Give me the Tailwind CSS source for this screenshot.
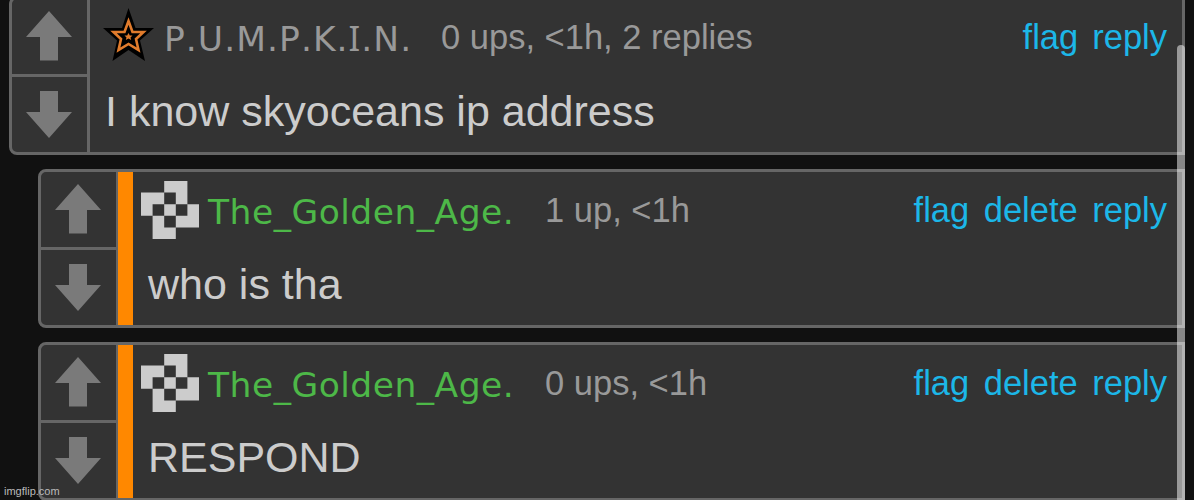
<!DOCTYPE html>
<html lang="en">
<head>
  <meta charset="UTF-8" />
  <meta name="viewport" content="width=device-width, initial-scale=1.0" />
  <title>Comments</title>
  <script src="https://cdn.jsdelivr.net/npm/@tailwindcss/browser@4"></script>
</head>
<body class="bg-[#111] h-[500px] overflow-hidden relative font-['Liberation_Sans',Arial,sans-serif]">
  <svg class="hidden">
    <symbol id="arrow-up" viewBox="0 0 46 50"><path d="M23 0L46 26H32V49.500H14V26H0Z" fill="#7a7a7a" /></symbol>
    <symbol id="arrow-down" viewBox="0 0 46 47"><path d="M14 0H32V21H46L23 47L0 21H14Z" fill="#7a7a7a" /></symbol>
    <symbol id="pixels" viewBox="0 0 5 5"><path d="M2 0H4V2H3V1H2ZM0 1H2V2H1V3H0ZM2 2H3V3H2ZM4 2H5V4H3V3H4ZM1 3H2V4H3V5H1Z" fill="#ccc" /></symbol>
  </svg>

  <main class="-mt-1 mr-[9px] flex flex-col gap-[15px]">
    <article class="ml-[9px] h-[158.500px] -mb-[0.5px] flex border-3 border-[#666] rounded-l-lg bg-[#333]">
      <div class="w-[78px] shrink-0 border-r-3 border-[#666] flex flex-col">
        <button class="h-[78px] shrink-0 border-b-3 border-[#666] flex justify-center pt-[11.500px] pr-[2px]"><svg class="w-[46px] h-[50px]"><use href="#arrow-up" /></svg></button>
        <button class="flex justify-center pt-[14px] pr-[2px]"><svg class="w-[46px] h-[47px]"><use href="#arrow-down" /></svg></button>
      </div>
      <div class="grow pl-[13px] pr-[15px]">
        <div class="flex h-[80px] pt-[9px]">
          <svg class="w-[52px] h-[54px] shrink-0" viewBox="0 0 52 54">
            <path d="M25.500 0L32.500 20H51L37 32.500L42 53L25.500 42L9.500 53L14 32.500L0 20H19Z" fill="#000" />
            <path d="M25.500 13L29.500 24H40.500L33 31L35.500 42L25.500 36L15.500 42L18 31L10.500 24H21.500Z" fill="none" stroke="#e07b2c" stroke-width="2.600" />
            <path d="M25.500 25L26.800 27.500H29.500L27.500 29.500L28.200 32L25.500 30.500L22.800 32L23.500 29.500L21.500 27.500H24.200Z" fill="#e07b2c" />
          </svg>
          <span class="ml-[9px] mt-[11px] w-[277px] text-[34.500px] leading-[40px] tracking-[1.05px] [font-kerning:none] whitespace-nowrap text-[#999] font-['DejaVu_Sans',sans-serif]">P.U.M.P.K.<span class="font-['Noto_Sans',sans-serif] leading-none">I</span>.N.</span>
          <span class="mt-[9px] text-[34.500px] leading-[40px] text-[#999]">0 ups, &lt;1h, 2 replies</span>
          <div class="ml-auto mt-[9px] flex gap-[14px] text-[34.500px] leading-[40px] text-[#1cb7e8]"><a>flag</a><a>reply</a></div>
        </div>
        <p class="pl-[2px] pt-[7px] text-[43px] leading-[50px] text-[#ccc]">I know skyoceans ip address</p>
      </div>
    </article>

    <article class="ml-[38px] h-[158.500px] -mb-[0.5px] flex border-3 border-[#666] rounded-l-lg bg-[#333]">
      <div class="w-[77px] shrink-0 border-r-2 border-[#666] flex flex-col">
        <button class="h-[78px] shrink-0 border-b-3 border-[#666] flex justify-center pt-[11.500px] pr-[2px]"><svg class="w-[46px] h-[50px]"><use href="#arrow-up" /></svg></button>
        <button class="flex justify-center pt-[14px] pr-[2px]"><svg class="w-[46px] h-[47px]"><use href="#arrow-down" /></svg></button>
      </div>
      <div class="w-[15px] shrink-0 bg-[#ff8800]"></div>
      <div class="grow pl-[8px] pr-[15px]">
        <div class="flex h-[80px] pt-[9px]">
          <svg class="w-[58px] h-[58px] shrink-0"><use href="#pixels" /></svg>
          <span class="ml-[9px] mt-[11px] w-[337px] text-[34.500px] leading-[40px] tracking-[0.5px] text-[#4db848] font-['DejaVu_Sans',sans-serif]">The_Golden_Age.</span>
          <span class="mt-[9px] text-[34.500px] leading-[40px] text-[#999]">1 up, &lt;1h</span>
          <div class="ml-auto mt-[9px] flex gap-[14.500px] text-[34.500px] leading-[40px] text-[#1cb7e8]"><a>flag</a><a>delete</a><a>reply</a></div>
        </div>
        <p class="pl-[7px] pt-[7px] text-[43px] leading-[50px] text-[#ccc]">who is tha</p>
      </div>
    </article>

    <article class="ml-[38px] h-[158.500px] -mb-[0.5px] flex border-3 border-[#666] rounded-l-lg bg-[#333]">
      <div class="w-[77px] shrink-0 border-r-2 border-[#666] flex flex-col">
        <button class="h-[78px] shrink-0 border-b-3 border-[#666] flex justify-center pt-[11.500px] pr-[2px]"><svg class="w-[46px] h-[50px]"><use href="#arrow-up" /></svg></button>
        <button class="flex justify-center pt-[14px] pr-[2px]"><svg class="w-[46px] h-[47px]"><use href="#arrow-down" /></svg></button>
      </div>
      <div class="w-[15px] shrink-0 bg-[#ff8800]"></div>
      <div class="grow pl-[8px] pr-[15px]">
        <div class="flex h-[80px] pt-[9px]">
          <svg class="w-[58px] h-[58px] shrink-0"><use href="#pixels" /></svg>
          <span class="ml-[9px] mt-[11px] w-[337px] text-[34.500px] leading-[40px] tracking-[0.5px] text-[#4db848] font-['DejaVu_Sans',sans-serif]">The_Golden_Age.</span>
          <span class="mt-[9px] text-[34.500px] leading-[40px] text-[#999]">0 ups, &lt;1h</span>
          <div class="ml-auto mt-[9px] flex gap-[14.500px] text-[34.500px] leading-[40px] text-[#1cb7e8]"><a>flag</a><a>delete</a><a>reply</a></div>
        </div>
        <p class="pl-[7px] pt-[7px] text-[43px] leading-[50px] text-[#ccc]">RESPOND</p>
      </div>
    </article>
  </main>

  <!-- scrollbar thumb -->
  <div class="absolute top-[45px] right-[9px] w-2 h-[470px] rounded-t-full bg-white/50"></div>
  <span class="absolute left-1 bottom-[2px] text-[11px] leading-[14px] text-[#bbb]">imgflip.com</span>
</body>
</html>
